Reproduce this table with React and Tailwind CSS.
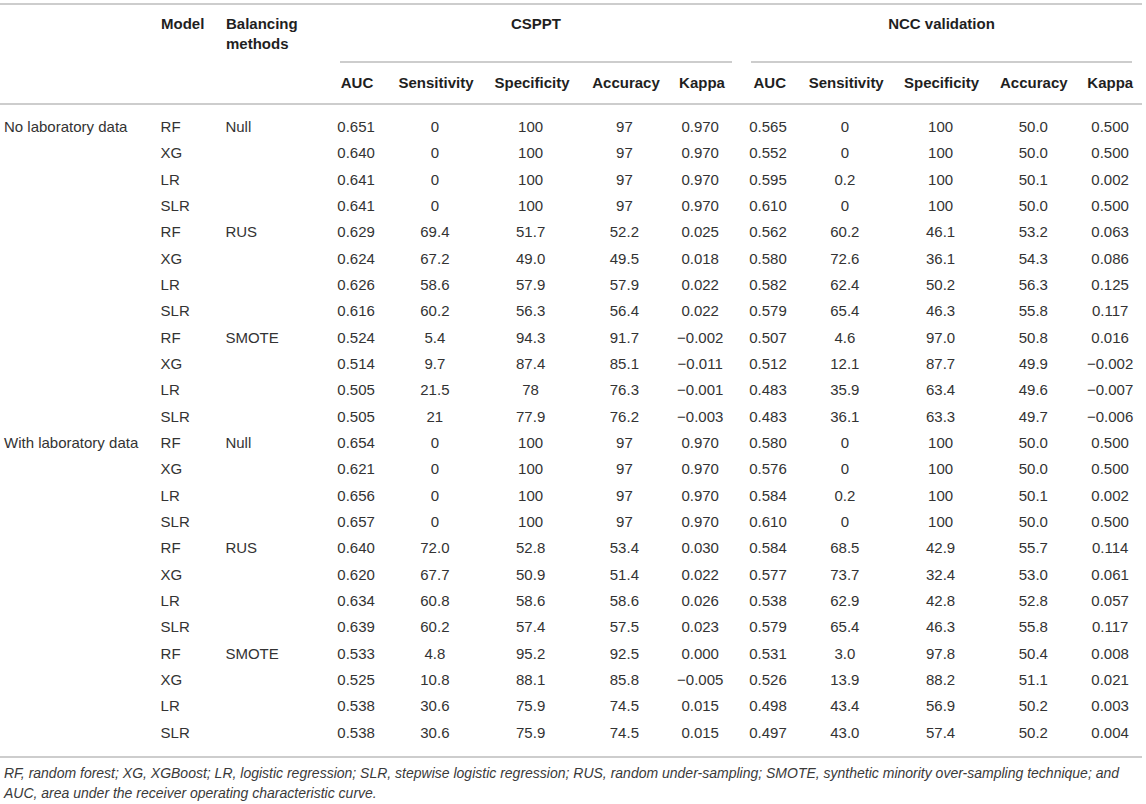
const widths = ["w-[80px]", "w-[78px]", "w-[114px]", "w-[74px]", "w-[78px]", "w-[58px]", "w-[96px]", "w-[96px]", "w-[90px]", "w-[64px]"];
const subHeads = ["AUC", "Sensitivity", "Specificity", "Accuracy", "Kappa"];

const M = "\u2212";

// [group, model, balancing, ...10 values]
const rows = [
  ["No laboratory data", "RF", "Null", "0.651", "0", "100", "97", "0.970", "0.565", "0", "100", "50.0", "0.500"],
  ["", "XG", "", "0.640", "0", "100", "97", "0.970", "0.552", "0", "100", "50.0", "0.500"],
  ["", "LR", "", "0.641", "0", "100", "97", "0.970", "0.595", "0.2", "100", "50.1", "0.002"],
  ["", "SLR", "", "0.641", "0", "100", "97", "0.970", "0.610", "0", "100", "50.0", "0.500"],
  ["", "RF", "RUS", "0.629", "69.4", "51.7", "52.2", "0.025", "0.562", "60.2", "46.1", "53.2", "0.063"],
  ["", "XG", "", "0.624", "67.2", "49.0", "49.5", "0.018", "0.580", "72.6", "36.1", "54.3", "0.086"],
  ["", "LR", "", "0.626", "58.6", "57.9", "57.9", "0.022", "0.582", "62.4", "50.2", "56.3", "0.125"],
  ["", "SLR", "", "0.616", "60.2", "56.3", "56.4", "0.022", "0.579", "65.4", "46.3", "55.8", "0.117"],
  ["", "RF", "SMOTE", "0.524", "5.4", "94.3", "91.7", M + "0.002", "0.507", "4.6", "97.0", "50.8", "0.016"],
  ["", "XG", "", "0.514", "9.7", "87.4", "85.1", M + "0.011", "0.512", "12.1", "87.7", "49.9", M + "0.002"],
  ["", "LR", "", "0.505", "21.5", "78", "76.3", M + "0.001", "0.483", "35.9", "63.4", "49.6", M + "0.007"],
  ["", "SLR", "", "0.505", "21", "77.9", "76.2", M + "0.003", "0.483", "36.1", "63.3", "49.7", M + "0.006"],
  ["With laboratory data", "RF", "Null", "0.654", "0", "100", "97", "0.970", "0.580", "0", "100", "50.0", "0.500"],
  ["", "XG", "", "0.621", "0", "100", "97", "0.970", "0.576", "0", "100", "50.0", "0.500"],
  ["", "LR", "", "0.656", "0", "100", "97", "0.970", "0.584", "0.2", "100", "50.1", "0.002"],
  ["", "SLR", "", "0.657", "0", "100", "97", "0.970", "0.610", "0", "100", "50.0", "0.500"],
  ["", "RF", "RUS", "0.640", "72.0", "52.8", "53.4", "0.030", "0.584", "68.5", "42.9", "55.7", "0.114"],
  ["", "XG", "", "0.620", "67.7", "50.9", "51.4", "0.022", "0.577", "73.7", "32.4", "53.0", "0.061"],
  ["", "LR", "", "0.634", "60.8", "58.6", "58.6", "0.026", "0.538", "62.9", "42.8", "52.8", "0.057"],
  ["", "SLR", "", "0.639", "60.2", "57.4", "57.5", "0.023", "0.579", "65.4", "46.3", "55.8", "0.117"],
  ["", "RF", "SMOTE", "0.533", "4.8", "95.2", "92.5", "0.000", "0.531", "3.0", "97.8", "50.4", "0.008"],
  ["", "XG", "", "0.525", "10.8", "88.1", "85.8", M + "0.005", "0.526", "13.9", "88.2", "51.1", "0.021"],
  ["", "LR", "", "0.538", "30.6", "75.9", "74.5", "0.015", "0.498", "43.4", "56.9", "50.2", "0.003"],
  ["", "SLR", "", "0.538", "30.6", "75.9", "74.5", "0.015", "0.497", "43.0", "57.4", "50.2", "0.004"],
];

function GroupHead({ title, offset, width, cols }) {
  return (
    <div className={`flex flex-col ${width}`}>
      <div className={`pt-[9px] pb-[27px] leading-5 text-center font-bold text-[#1f1f1f] border-b-2 border-[#cdcdcd] ${offset}`}>
        {title}
      </div>
      <div className="flex h-[40px] items-center">
        {subHeads.map((h, i) => (
          <div key={h} className={`${widths[cols + i]} text-center font-bold text-[#1f1f1f] whitespace-nowrap`}>
            {h}
          </div>
        ))}
      </div>
    </div>
  );
}

export default function App() {
  return (
    <div className="w-[1146px] bg-white pt-[3px] font-['Liberation_Sans',Arial,sans-serif] text-[15px] text-[#333]">
      {/* header */}
      <div className="flex border-y-2 border-[#cdcdcd] w-[1142px]">
        <div className="w-[161px]" />
        <div className="w-[65px] pt-[9px] leading-5 font-bold text-[#1f1f1f]">Model</div>
        <div className="w-[91px] pt-[9px] leading-5 font-bold text-[#1f1f1f]">Balancing methods</div>
        <GroupHead title="CSPPT" offset="ml-[23px] mr-[9px]" width="w-[424px]" cols={0} />
        <GroupHead title="NCC validation" offset="ml-[10px] mr-[10px]" width="w-[401px]" cols={5} />
      </div>

      {/* body */}
      <div className="pt-[9px] pb-[10px] border-b-2 border-[#cdcdcd] w-[1142px]">
        {rows.map((r, idx) => (
          <div key={idx} className="flex h-[26.35px] items-center whitespace-nowrap">
            <div className="w-[161px] pl-[4px]">{r[0]}</div>
            <div className="w-[65px]">{r[1]}</div>
            <div className="w-[91px]">{r[2]}</div>
            {r.slice(3).map((v, i) => (
              <div key={i} className={`${widths[i]} text-center`}>
                {v}
              </div>
            ))}
          </div>
        ))}
      </div>

      {/* footnote */}
      <p className="pt-[5px] pl-[4px] w-[1130px] italic text-[14px] leading-5 text-[#3a3a3a]">
        RF, random forest; XG, XGBoost; LR, logistic regression; SLR, stepwise logistic regression; RUS, random under-sampling; SMOTE, synthetic minority over-sampling technique; and AUC, area under the receiver operating characteristic curve.
      </p>
    </div>
  );
}
